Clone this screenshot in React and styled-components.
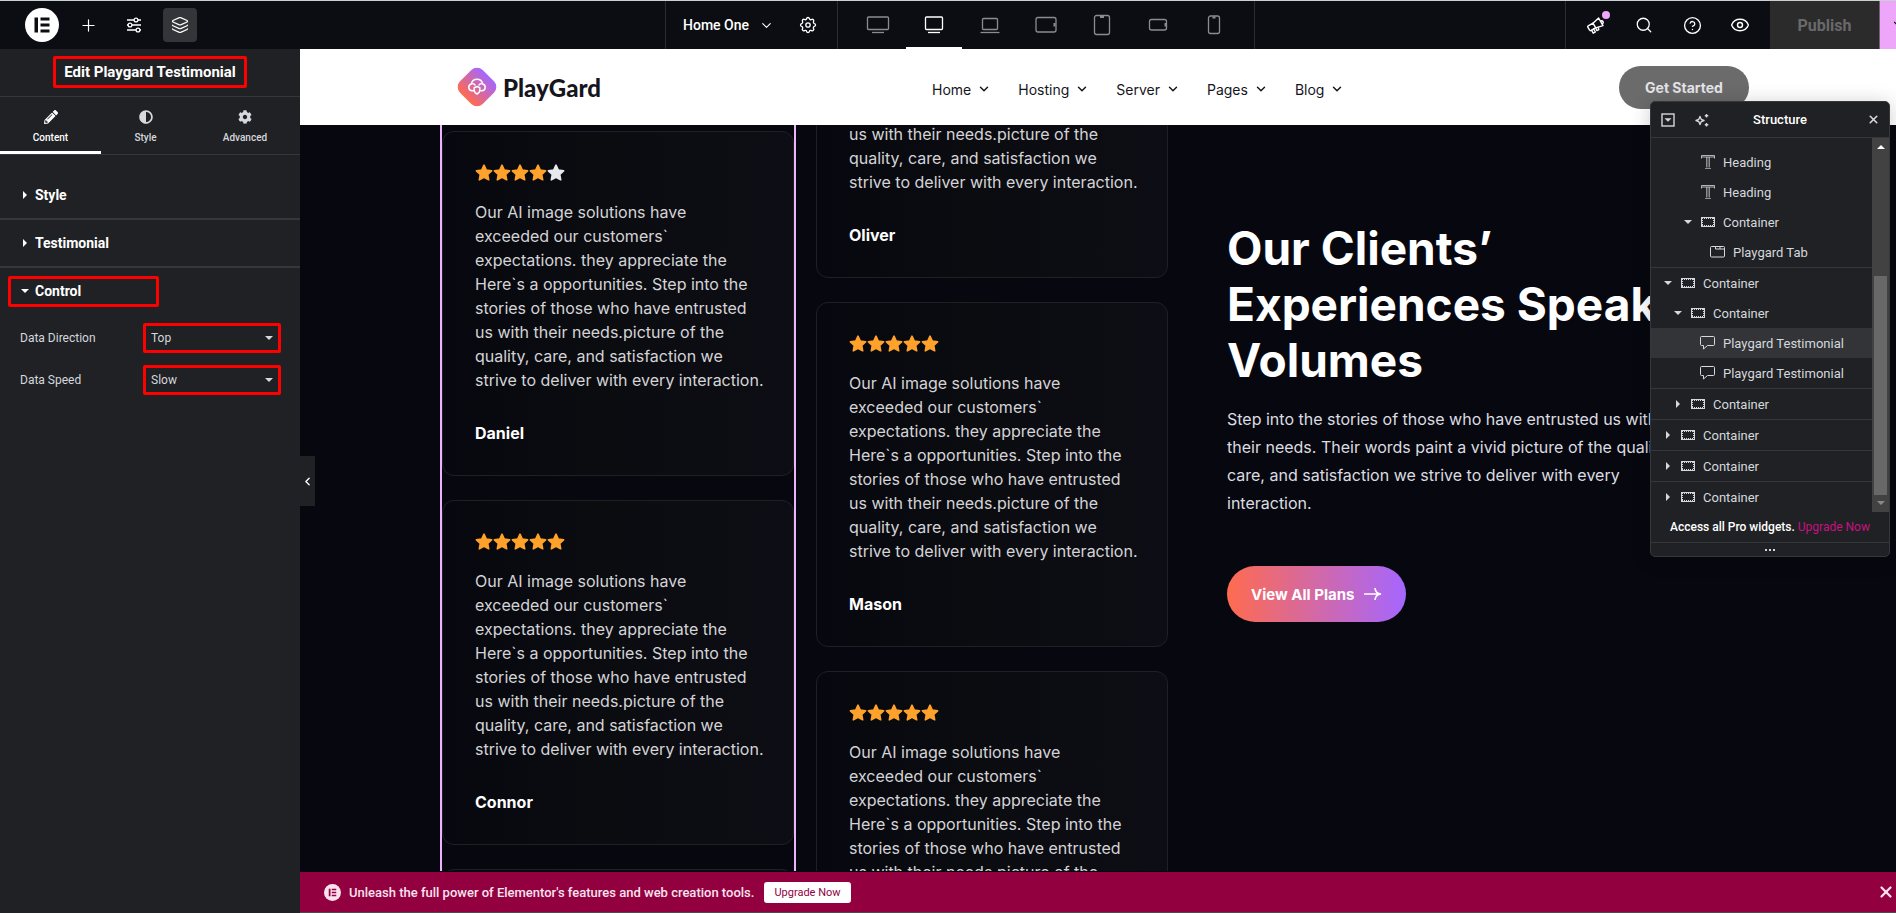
import styled, { createGlobalStyle, css } from 'styled-components';
import { useState } from 'react';
import { Plus, Layers, Search, CircleHelp, Eye, ChevronDown, ChevronLeft, X } from 'lucide-react';
import { FaPencilAlt, FaAdjust, FaCog } from 'react-icons/fa';

const devices = [
    { id: 'widescreen', label: 'Widescreen' },
    { id: 'desktop', label: 'Desktop' },
    { id: 'laptop', label: 'Laptop' },
    { id: 'tablet-landscape', label: 'Tablet Landscape' },
    { id: 'tablet', label: 'Tablet Portrait' },
    { id: 'mobile-landscape', label: 'Mobile Landscape' },
    { id: 'mobile', label: 'Mobile Portrait' },
];

const menu = ['Home', 'Hosting', 'Server', 'Pages', 'Blog'];

const review = `Our AI image solutions have
exceeded our customers\`
expectations. they appreciate the
Here\`s a opportunities. Step into the
stories of those who have entrusted
us with their needs.picture of the
quality, care, and satisfaction we
strive to deliver with every interaction.`;

const leftReviews = [
    { name: 'Daniel', stars: 4 },
    { name: 'Connor', stars: 5 },
    { name: 'Ethan', stars: 5 },
];

const rightReviews = [
    { name: 'Oliver', stars: 5 },
    { name: 'Mason', stars: 5 },
    { name: 'Logan', stars: 5 },
];

const tree = [
    { type: 'heading', label: 'Heading', level: 2 },
    { type: 'heading', label: 'Heading', level: 2 },
    { type: 'container', label: 'Container', level: 2, arrow: 'down' },
    { type: 'tab', label: 'Playgard Tab', level: 3 },
    { type: 'container', label: 'Container', level: 0, arrow: 'down', line: true },
    { type: 'container', label: 'Container', level: 1, arrow: 'down' },
    { type: 'testimonial', label: 'Playgard Testimonial', level: 2, active: true },
    { type: 'testimonial', label: 'Playgard Testimonial', level: 2 },
    { type: 'container', label: 'Container', level: 1, arrow: 'right', line: true },
    { type: 'container', label: 'Container', level: 0, arrow: 'right', line: true },
    { type: 'container', label: 'Container', level: 0, arrow: 'right', line: true },
    { type: 'container', label: 'Container', level: 0, arrow: 'right', line: true },
];

const DeviceIcon = ({ id }) => (
    <svg width="26" height="22" viewBox="0 0 26 22" fill="none" stroke="currentColor" strokeWidth="1.3">
        {id === 'widescreen' && <><rect x="2.5" y="3" width="21" height="12.5" rx="1" /><path d="M7 18.5h12" /></>}
        {id === 'desktop' && <><rect x="4.5" y="3" width="17" height="12.5" rx="1" /><path d="M7 18.5h12" /></>}
        {id === 'laptop' && <><rect x="5.5" y="4.5" width="15" height="11" rx="1" /><path d="M3.5 18.5h19" /></>}
        {id === 'tablet-landscape' && <><rect x="3" y="3.5" width="20" height="14.5" rx="2" /><path d="M21.5 9v3.5" strokeWidth="2" /></>}
        {id === 'tablet' && <><rect x="5.5" y="1.5" width="15" height="19" rx="2" /><path d="M11 3h4" strokeWidth="2" /></>}
        {id === 'mobile-landscape' && <><rect x="4.5" y="5.5" width="17" height="10.5" rx="2" /><path d="M20.5 9v3.5" strokeWidth="2" /></>}
        {id === 'mobile' && <><rect x="7.5" y="2" width="11" height="17.5" rx="2" /><path d="M11.5 3.5h3" strokeWidth="2" /></>}
    </svg>
);

const SlidersIcon = () => (
    <svg width="18" height="18" viewBox="0 0 18 18" fill="none" stroke="currentColor" strokeWidth="1.3">
        <path d="M2 4h7M13 4h3M2 9h1M7 9h9M2 14h9M15 14h1" />
        <circle cx="11" cy="4" r="1.9" />
        <circle cx="5" cy="9" r="1.9" />
        <circle cx="13" cy="14" r="1.9" />
    </svg>
);

const GearIcon = () => (
    <svg width="20" height="20" viewBox="0 0 24 24" fill="none" stroke="currentColor" strokeWidth="1.6" strokeLinejoin="round">
        <path d="M10.3 4.3c.4-1.7 3-1.7 3.4 0a1.7 1.7 0 0 0 2.6 1.1c1.5-.9 3.3.8 2.4 2.4a1.7 1.7 0 0 0 1 2.5c1.8.4 1.8 3 0 3.4a1.7 1.7 0 0 0-1 2.6c.9 1.5-.9 3.3-2.4 2.4a1.7 1.7 0 0 0-2.6 1c-.4 1.8-3 1.8-3.4 0a1.7 1.7 0 0 0-2.5-1c-1.6.9-3.3-.9-2.4-2.4a1.7 1.7 0 0 0-1.1-2.6c-1.7-.4-1.7-3 0-3.4a1.7 1.7 0 0 0 1.1-2.5c-.9-1.6.8-3.3 2.4-2.4 1 .6 2.3 0 2.5-1.1z" />
        <circle cx="12" cy="12" r="2.6" />
    </svg>
);

const MegaphoneIcon = () => (
    <svg width="20" height="20" viewBox="0 0 20 20" fill="none" stroke="currentColor" strokeWidth="1.4" strokeLinejoin="round" strokeLinecap="round">
        <path d="M2.2 10.8 7 8.2l2.7 4.6-4.8 2.7a1 1 0 0 1-1.3-.3l-1.8-3a1 1 0 0 1 .4-1.4z" />
        <path d="M7 8.2 12.6 3l4.4 7.6-7.3 2.2M15.4 5.8c1.5-.2 2.4 1.5 1.4 2.7M5.6 15.2l1.6 3 2.2-1.2-1.9-3.2M9.8 13l1 2.6 2-1-.6-2.3" />
    </svg>
);

const TreeIcon = ({ type }) => (
    <svg width="16" height="16" viewBox="0 0 16 16" fill="none" stroke="currentColor" strokeWidth="1">
        {type === 'heading' && <><path d="M1.5 4.5v-3h13v3M1.5 3h13" strokeOpacity=".8" /><path d="M6.5 3v10.5M8 3v10.5M9.5 3v10.5M5 14.5h6" strokeOpacity=".6" /></>}
        {type === 'container' && <><rect x="1.5" y="3.5" width="13" height="9" /><path d="M2 4.5h12M2 11.5h12M2.5 4v8M13.5 4v8" strokeDasharray="1 1" /></>}
        {type === 'tab' && <><rect x=".5" y="2.5" width="14" height="10.5" rx="1" /><path d="M5.5 2.5v2.5h9M10 2.5v2.5" /></>}
        {type === 'testimonial' && <path d="M1.5 1.5h12q1 0 1 1v7q0 1-1 1H7.5L3.5 14v-3.5h-2q-1 0-1-1v-7q0-1 1-1z" />}
    </svg>
);

const Caret = ({ dir }) => (
    <svg width="8" height="8" viewBox="0 0 8 8" fill="currentColor">
        {dir === 'down' && <path d="M0 2h8L4 6z" />}
        {dir === 'right' && <path d="M2 0v8l4-4z" />}
        {dir === 'up' && <path d="M0 6h8L4 2z" />}
    </svg>
);

const ElementorMark = ({ size, bg, fg }) => (
    <svg width={size} height={size} viewBox="0 0 34 34">
        <circle cx="17" cy="17" r="17" fill={bg} />
        <path d="M9.5 9.5h3.5v15h-3.5zM15.5 9.5h9v3h-9zM15.5 15.5h9v3h-9zM15.5 21.5h9v3h-9z" fill={fg} />
    </svg>
);

const Star = ({ filled }) => (
    <svg width="18" height="18" viewBox="0 0 18 18">
        <path
            d="M9 1.2l2.3 4.9 5.3.7-3.9 3.7 1 5.3L9 13.2l-4.7 2.6 1-5.3L1.4 6.8l5.3-.7z"
            fill={filled ? '#ffa22b' : '#e8e9ed'}
            stroke={filled ? '#ffa22b' : '#e8e9ed'}
            strokeWidth="1.6"
            strokeLinejoin="round"
        />
    </svg>
);

const Card = ({ name, stars }) => (
    <CardBox>
        <Stars role="img" aria-label={`${stars} of 5`}>
            {[1, 2, 3, 4, 5].map(n => <Star key={n} filled={n <= stars} />)}
        </Stars>
        <p>{review}</p>
        <h3>{name}</h3>
    </CardBox>
);

const App = () => {
    const [device, setDevice] = useState('desktop');
    const [direction, setDirection] = useState('Top');
    const [speed, setSpeed] = useState('Slow');

    return (
        <Page>
            <GlobalStyle />
            <TopBar>
                <BarTools>
                    <ElementorMark size={34} bg="#fff" fg="#0c0d0e" />
                    <ToolButton aria-label="Add element"><Plus size={19} strokeWidth={1.5} /></ToolButton>
                    <ToolButton aria-label="Site settings"><SlidersIcon /></ToolButton>
                    <ToolButton $active aria-label="Structure"><Layers size={18} strokeWidth={1.6} /></ToolButton>
                </BarTools>
                <BarCenter>
                    <PageButton>Home One <ChevronDown size={15} strokeWidth={1.8} /></PageButton>
                    <SettingsButton aria-label="Page settings"><GearIcon /></SettingsButton>
                    <Devices>
                        {devices.map(({ id, label }) => (
                            <DeviceButton key={id} aria-label={label} $active={id === device} onClick={() => setDevice(id)}>
                                <DeviceIcon id={id} />
                            </DeviceButton>
                        ))}
                    </Devices>
                </BarCenter>
                <BarRight>
                    <IconButtons>
                        <BarIcon aria-label="What's new"><MegaphoneIcon /><Dot /></BarIcon>
                        <BarIcon aria-label="Finder"><Search size={18} strokeWidth={1.7} /></BarIcon>
                        <BarIcon aria-label="Help"><CircleHelp size={19} strokeWidth={1.7} /></BarIcon>
                        <BarIcon aria-label="Preview"><Eye size={20} strokeWidth={1.7} /></BarIcon>
                    </IconButtons>
                    <Publish disabled>Publish</Publish>
                    <SaveOptions aria-label="Save options"><ChevronDown size={14} strokeWidth={2} /></SaveOptions>
                </BarRight>
            </TopBar>

            <Workspace>
                <Sidebar>
                    <PanelTitle><h2>Edit Playgard Testimonial</h2></PanelTitle>
                    <Tabs>
                        <Tab $active $grow={101}><FaPencilAlt size={14} />Content</Tab>
                        <Tab $grow={89}><FaAdjust size={14} />Style</Tab>
                        <Tab $grow={110}><FaCog size={14} />Advanced</Tab>
                    </Tabs>
                    <Sections>
                        <SectionHeading><SectionToggle><Caret dir="right" />Style</SectionToggle></SectionHeading>
                        <SectionHeading><SectionToggle><Caret dir="right" />Testimonial</SectionToggle></SectionHeading>
                        <SectionHeading $open><SectionToggle $marked><Caret dir="down" />Control</SectionToggle></SectionHeading>
                        <Controls>
                            <Control>
                                <label htmlFor="direction">Data Direction</label>
                                <SelectBox>
                                    <select id="direction" value={direction} onChange={e => setDirection(e.target.value)}>
                                        <option>Top</option>
                                        <option>Bottom</option>
                                    </select>
                                    <Caret dir="down" />
                                </SelectBox>
                            </Control>
                            <Control>
                                <label htmlFor="speed">Data Speed</label>
                                <SelectBox>
                                    <select id="speed" value={speed} onChange={e => setSpeed(e.target.value)}>
                                        <option>Slow</option>
                                        <option>Fast</option>
                                    </select>
                                    <Caret dir="down" />
                                </SelectBox>
                            </Control>
                        </Controls>
                    </Sections>
                    <Collapse aria-label="Hide panel"><ChevronLeft size={13} strokeWidth={2.5} /></Collapse>
                </Sidebar>

                <Preview>
                    <SiteHeader>
                        <Brand href="#home">
                            <svg width="40" height="40" viewBox="0 0 40 40">
                                <defs>
                                    <linearGradient id="brand" x1="0" y1=".5" x2="1" y2=".5">
                                        <stop offset="0" stopColor="#ff6b4f" />
                                        <stop offset="1" stopColor="#a566ff" />
                                    </linearGradient>
                                </defs>
                                <rect x="4" y="4" width="32" height="32" rx="8" transform="rotate(-45 20 20)" fill="url(#brand)" />
                                <path d="M16.2 23.7H15a3.4 3.4 0 0 1-.6-6.7 5.7 5.7 0 0 1 11.2 0 3.4 3.4 0 0 1-.6 6.700h-1.200M16 16.800a3 3 0 0 1 2 1.200M24 16.800a3 3 0 0 0-2 1.200M20 19.500l2.800 1.200v2.600c0 1.700-1.200 2.900-2.800 3.700-1.600-.8-2.800-2-2.800-3.700v-2.600z" fill="none" stroke="#fff" strokeWidth="1.5" strokeLinejoin="round" strokeLinecap="round" />
                            </svg>
                            PlayGard
                        </Brand>
                        <Menu>
                            {menu.map(item => (
                                <a key={item} href={`#${item.toLowerCase()}`}>{item}<ChevronDown size={14} strokeWidth={2.5} /></a>
                            ))}
                        </Menu>
                        <GetStarted>Get Started</GetStarted>
                    </SiteHeader>
                    <Testimonials>
                        <Marquee $selected>
                            <Track $offset={6}>{leftReviews.map(r => <Card key={r.name} {...r} />)}</Track>
                        </Marquee>
                        <Marquee>
                            <Track $offset={-192}>{rightReviews.map(r => <Card key={r.name} {...r} />)}</Track>
                        </Marquee>
                        <Intro>
                            <h1>Our Clients’ Experiences Speak Volumes</h1>
                            <p>Step into the stories of those who have entrusted us with their needs. Their words paint a vivid picture of the quality, care, and satisfaction we strive to deliver with every interaction.</p>
                            <PlansLink href="#plans">
                                View All Plans
                                <svg width="18" height="14" viewBox="0 0 18 14" fill="none" stroke="currentColor" strokeWidth="1.6">
                                    <path d="M0 7h17M11 1c.3 3.3 2.5 5.7 6 6-3.5.3-5.7 2.7-6 6" />
                                </svg>
                            </PlansLink>
                        </Intro>
                    </Testimonials>
                    <Promo>
                        <ElementorMark size={17} bg="#f9e3ee" fg="#93003f" />
                        <span>Unleash the full power of Elementor's features and web creation tools.</span>
                        <PromoButton href="#upgrade">Upgrade Now</PromoButton>
                        <PromoClose aria-label="Dismiss"><X size={18} strokeWidth={3} /></PromoClose>
                    </Promo>
                </Preview>

                <Structure>
                    <StructureHeader>
                        <button aria-label="Expand all">
                            <svg width="14" height="14" viewBox="0 0 14 14" fill="none" stroke="currentColor" strokeWidth="1.4">
                                <rect x="1" y="1" width="12" height="12" />
                                <path d="M4 5.5h6L7 8.5z" fill="currentColor" strokeWidth=".5" />
                            </svg>
                        </button>
                        <button aria-label="Rename with AI">
                            <svg width="14" height="14" viewBox="0 0 14 14" fill="none" stroke="currentColor" strokeWidth="1.4">
                                <path d="M5 3.5 6.2 6.3 9 7.5 6.2 8.7 5 11.5 3.8 8.7 1 7.5 3.8 6.3z" strokeLinejoin="round" />
                                <path d="M11.5 1v3.5M9.8 2.7h3.5M11.5 10v3.5M9.8 11.7h3.5" />
                            </svg>
                        </button>
                        <h2>Structure</h2>
                        <button aria-label="Close"><X size={13} strokeWidth={3} /></button>
                    </StructureHeader>
                    <StructureBody>
                        <Tree>
                            {tree.map((node, i) => (
                                <Node key={i} $level={node.level} $active={node.active} $line={node.line}>
                                    <Caret dir={node.arrow} />
                                    <TreeIcon type={node.type} />
                                    {node.label}
                                </Node>
                            ))}
                        </Tree>
                        <Scrollbar>
                            <Caret dir="up" />
                            <Thumb />
                            <Caret dir="down" />
                        </Scrollbar>
                    </StructureBody>
                    <ProNote>Access all Pro widgets. <a href="#upgrade">Upgrade Now</a></ProNote>
                    <Resize><i /><i /><i /></Resize>
                </Structure>
            </Workspace>
        </Page>
    );
};

export default App;

const GlobalStyle = createGlobalStyle`
    *{
        box-sizing: border-box;
        margin: 0;
        padding: 0;
    }

    body{
        font-family: Roboto, Arial, sans-serif;
        background-color: #090a12;
    }

    button{
        font-family: inherit;
        color: inherit;
        background: none;
        border: none;
        cursor: pointer;
    }

    a{
        color: inherit;
        text-decoration: none;
    }

    svg{
        flex-shrink: 0;
    }
`

const Page = styled.div`
    display: flex;
    flex-direction: column;
    height: 100vh;
    overflow: hidden;
`

const TopBar = styled.header`
    display: grid;
    grid-template-columns: minmax(200px, 665px) auto 1fr;
    flex: none;
    height: 49px;
    color: #fff;
    background-color: #0c0d12;
    border-top: 1px solid #c9d1cf;
`

const BarTools = styled.div`
    display: flex;
    align-items: center;
    gap: 12px;
    padding-left: 25px;
`

const ToolButton = styled.button`
    display: grid;
    place-items: center;
    width: 34px;
    height: 34px;
    border-radius: 4px;
    background-color: ${({ $active }) => ($active ? '#343538' : 'transparent')};
`

const BarCenter = styled.div`
    display: flex;
    border-left: 1px solid #2b2c2f;
    border-right: 1px solid #2b2c2f;
`

const PageButton = styled.button`
    display: flex;
    align-items: center;
    gap: 10px;
    padding: 0 5px 0 17px;
    font-size: 14px;
    font-weight: 500;
`

const SettingsButton = styled.button`
    display: grid;
    place-items: center;
    width: 58px;
`

const Devices = styled.div`
    display: flex;
    padding: 0 12px;
    border-left: 1px solid #2b2c2f;
`

const DeviceButton = styled.button`
    display: grid;
    place-items: center;
    width: 56px;
    padding-top: 2px;
    color: ${({ $active }) => ($active ? '#fff' : '#8a8c90')};
    border-bottom: 2px solid ${({ $active }) => ($active ? '#fff' : 'transparent')};
`

const BarRight = styled.div`
    display: flex;
    justify-content: flex-end;
`

const IconButtons = styled.div`
    display: flex;
    padding: 0 6px;
    border-left: 1px solid #2b2c2f;
`

const BarIcon = styled.button`
    position: relative;
    display: grid;
    place-items: center;
    width: 48px;
`

const Dot = styled.span`
    position: absolute;
    top: 10px;
    right: 10px;
    width: 8px;
    height: 8px;
    border-radius: 50%;
    background-color: #eda6f9;
`

const Publish = styled.button`
    width: 109px;
    color: #69696b;
    background-color: #2b2b2b;
    font-size: 16px;
    font-weight: 700;
`

const SaveOptions = styled.button`
    width: 17px;
    padding-left: 11px;
    overflow: hidden;
    color: #0c0d12;
    background-color: #eda6f9;
    border-left: 1px solid #6d6470;
`

const Workspace = styled.div`
    position: relative;
    display: flex;
    flex: 1;
    min-height: 0;
`

const Sidebar = styled.aside`
    position: relative;
    flex: 0 0 300px;
    z-index: 1;
    color: #fff;
    background-color: #1f2124;
`

const PanelTitle = styled.div`
    display: flex;
    justify-content: center;
    padding: 7px 0 8px;
    border-bottom: 1px solid #35373b;

    h2{
        padding: 0 8px;
        line-height: 26px;
        font-size: 15px;
        font-weight: 700;
        border: 3px solid #f00;
        border-radius: 2px;
    }
`

const Tabs = styled.div`
    display: flex;
    height: 58px;
    border-bottom: 1px solid #35373b;
`

const Tab = styled.button`
    display: flex;
    flex-direction: column;
    align-items: center;
    flex: ${({ $grow }) => $grow} 0 0;
    gap: 8px;
    padding-top: 13px;
    line-height: 12px;
    font-size: 10px;
    font-weight: 500;
    color: ${({ $active }) => ($active ? '#fff' : '#d5d8dc')};
    border-bottom: 3px solid ${({ $active }) => ($active ? '#fff' : 'transparent')};
`

const Sections = styled.div`
    padding-top: 17px;
`

const SectionHeading = styled.h3`
    display: flex;
    align-items: center;
    height: ${({ $open }) => ($open ? '46px' : '48px')};
    padding: 0 8px;
    border-bottom: ${({ $open }) => ($open ? '0' : '2px')} solid #35373b;
`

const SectionToggle = styled.button`
    display: flex;
    align-items: center;
    gap: 6px;
    width: 151px;
    height: 31px;
    padding-left: 10px;
    font-size: 14px;
    font-weight: 700;
    border: 3px solid ${({ $marked }) => ($marked ? '#f00' : 'transparent')};
    border-radius: 2px;
`

const Controls = styled.div`
    display: flex;
    flex-direction: column;
    gap: 12px;
    padding: 9px 19px 0 20px;
`

const Control = styled.div`
    display: flex;
    align-items: center;
    justify-content: space-between;
    color: #d5d8dc;
    font-size: 12px;
`

const SelectBox = styled.div`
    display: grid;
    align-items: center;

    select, svg{
        grid-area: 1 / 1;
    }

    select{
        appearance: none;
        width: 138px;
        height: 30px;
        padding: 0 5px;
        color: inherit;
        font-family: inherit;
        font-size: 12px;
        background-color: #1f2124;
        border: 3px solid #f00;
        border-radius: 2px;
    }

    svg{
        justify-self: end;
        margin-right: 8px;
        pointer-events: none;
    }
`

const Collapse = styled.button`
    position: absolute;
    top: 407px;
    left: 100%;
    display: grid;
    place-items: center;
    width: 15px;
    height: 50px;
    background-color: #1f2124;
`

const Preview = styled.main`
    display: flex;
    flex-direction: column;
    flex: 1;
    min-width: 0;
    font-family: Inter, Arial, sans-serif;
`

const SiteHeader = styled.div`
    display: grid;
    grid-template-columns: 475px 1fr auto;
    align-items: center;
    flex: none;
    height: 76px;
    padding: 0 147px 0 157px;
    color: #15161b;
    background-color: #fff;
`

const Brand = styled.a`
    display: flex;
    align-items: center;
    gap: 6px;
    font-family: Lato, sans-serif;
    font-size: 24px;
    font-weight: 900;
`

const Menu = styled.nav`
    display: flex;
    gap: 27px;
    padding-top: 4px;
    font-size: 14px;

    a{
        display: flex;
        align-items: center;
        gap: 6px;
    }
`

const GetStarted = styled.button`
    width: 130px;
    height: 43px;
    border-radius: 22px;
    color: #e4e4e8;
    background-color: #6b6b6b;
    font-size: 14px;
    font-weight: 700;
`

const Testimonials = styled.section`
    display: flex;
    gap: 20px;
    flex: 1;
    min-height: 0;
    padding: 0 136px 0 140px;
    overflow: hidden;
    color: #fff;
    background-color: #07080f;
`

const Marquee = styled.div`
    flex: none;
    overflow: hidden;

    ${({ $selected }) => $selected && css`
        border: solid #eeb3fa;
        border-width: 0 2px;
    `}
`

const Track = styled.div`
    display: flex;
    flex-direction: column;
    gap: 24px;
    margin-top: ${({ $offset }) => $offset}px;
`

const CardBox = styled.article`
    width: 352px;
    padding: 32px 24px 31px 32px;
    border: 1px solid #1f2022;
    border-radius: 12px;
    background-image: linear-gradient(90deg, #07080f, #0b0c10 45%, #0d0d15);

    p{
        margin-top: 18px;
        line-height: 24px;
        font-size: 16px;
        color: #d4d4d7;
        white-space: pre-line;
    }

    h3{
        margin-top: 30px;
        line-height: 22px;
        font-size: 16px;
        font-weight: 700;
    }
`

const Stars = styled.div`
    display: flex;
`

const Intro = styled.div`
    flex: 1;
    min-width: 0;
    padding: 95px 88px 0 39px;

    h1{
        line-height: 56px;
        font-size: 46px;
        font-weight: 700;
    }

    p{
        margin-top: 17px;
        line-height: 28px;
        font-size: 16px;
        color: #dcdce0;
    }
`

const PlansLink = styled.a`
    display: inline-flex;
    align-items: center;
    gap: 10px;
    height: 56px;
    margin-top: 49px;
    padding: 0 24px;
    border-radius: 28px;
    background-image: linear-gradient(90deg, #ff6b4f, #a566ff);
    font-size: 15px;
    font-weight: 700;
`

const Promo = styled.div`
    display: flex;
    align-items: center;
    flex: none;
    gap: 8px;
    height: 42px;
    padding: 0 1px 0 24px;
    color: #f9e3ee;
    background-color: #93003f;
    border-top: 1px solid #07080f;
    border-bottom: 1px solid #4b4b4d;
    font-family: Roboto, sans-serif;
    font-size: 13px;
    font-weight: 500;
`

const PromoButton = styled.a`
    margin-left: 2px;
    padding: 0 10px;
    line-height: 21px;
    border-radius: 3px;
    color: #93003f;
    background-color: #fff;
    font-size: 11px;
    font-weight: 400;
`

const PromoClose = styled.button`
    display: flex;
    margin-left: auto;
`

const Structure = styled.aside`
    position: absolute;
    top: 52px;
    right: 6px;
    z-index: 2;
    width: 240px;
    overflow: hidden;
    color: #fff;
    background-color: #1f2124;
    border: 1px solid #35373b;
    border-radius: 5px;
    box-shadow: 0 2px 20px rgba(0, 0, 0, .2);
`

const StructureHeader = styled.div`
    display: flex;
    align-items: center;
    height: 36px;
    padding: 0 9px 0 10px;
    border-bottom: 1px solid #35373b;

    h2{
        flex: 1;
        padding-right: 36px;
        text-align: center;
        font-size: 13px;
        font-weight: 500;
    }

    button{
        display: flex;
        margin-right: 20px;
        color: #d5d8dc;
    }

    button:last-child{
        margin-right: 0;
    }
`

const StructureBody = styled.div`
    display: flex;
    height: 374px;
`

const Tree = styled.ul`
    flex: 1;
    padding-top: 9px;
    list-style: none;
`

const Node = styled.li`
    display: flex;
    align-items: center;
    height: ${({ $line }) => ($line ? '31px' : '30px')};
    padding-left: ${({ $level }) => 13 + $level * 10}px;
    font-size: 13px;
    color: #d5d8dc;
    background-color: ${({ $active }) => ($active ? '#323438' : 'transparent')};
    border-top: ${({ $line }) => ($line ? '1px' : '0')} solid #35373b;

    svg:nth-child(2){
        margin: 0 7px 0 8px;
    }
`

const Scrollbar = styled.div`
    display: flex;
    flex-direction: column;
    align-items: center;
    justify-content: space-between;
    width: 17px;
    padding: 5px 0;
    color: #fff;
    background-color: #424242;

    svg:last-child{
        color: #88898b;
    }
`

const Thumb = styled.div`
    width: 13px;
    height: 219px;
    margin: auto 0 4px;
    background-color: #686868;
`

const ProNote = styled.p`
    padding: 0 19px;
    line-height: 30px;
    font-size: 12px;
    font-weight: 500;
    white-space: nowrap;

    a{
        color: #c7127f;
        font-weight: 400;
    }
`

const Resize = styled.div`
    display: flex;
    align-items: center;
    justify-content: center;
    gap: 2px;
    height: 14px;
    border-top: 1px solid #35373b;

    i{
        width: 2px;
        height: 2px;
        background-color: #d5d8dc;
    }
`
